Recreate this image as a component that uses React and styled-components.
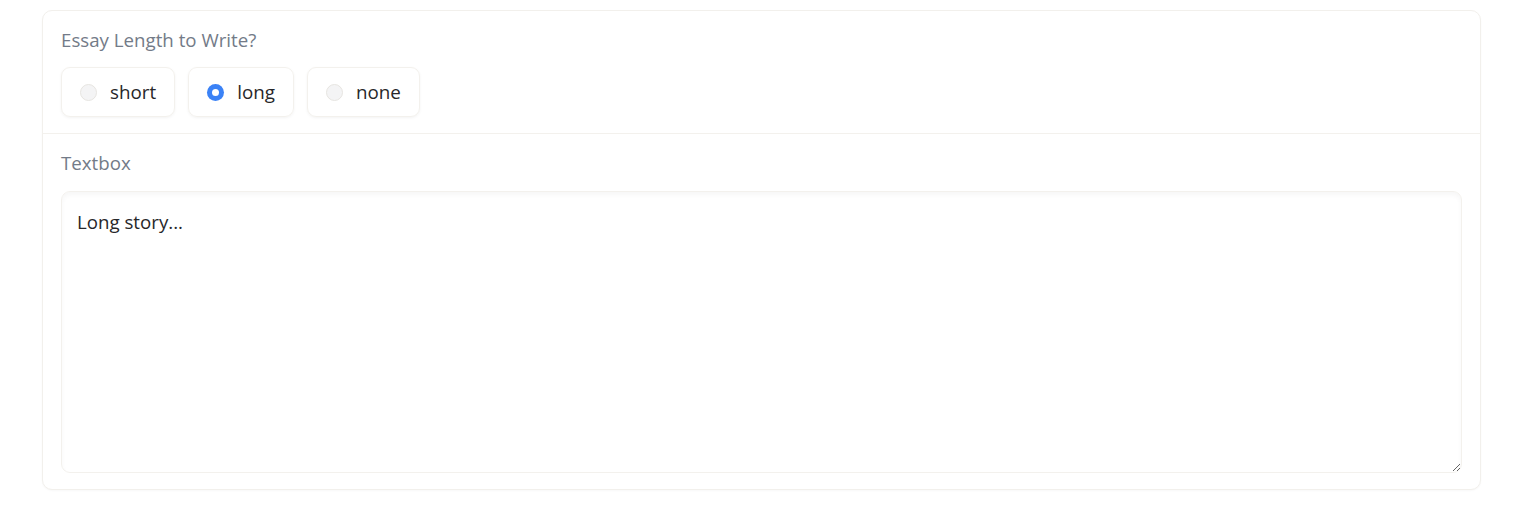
import React from "react";
import styled, { createGlobalStyle } from "styled-components";

const Global = createGlobalStyle`
  html, body { margin: 0; padding: 0; background: #ffffff; }
  body { font-family: "Open Sans", "Noto Sans", sans-serif; }
  * { box-sizing: border-box; }
`;

const Page = styled.div`
  padding: 10px 46px 22px 42px;
`;

const Card = styled.div`
  border: 1px solid #f2f0ec;
  border-radius: 10px;
  background: #fff;
  box-shadow: 0 1px 2px rgba(0, 0, 0, 0.03);
  overflow: hidden;
`;

const Section = styled.div`
  display: flex;
  flex-direction: column;
  gap: ${(p) => p.$gap}px;
  padding: ${(p) => p.$pad};
  border-top: ${(p) => (p.$divider ? "1px solid #f3f1ed" : "none")};
`;

const Label = styled.div`
  font-size: 18.7px;
  line-height: 24px;
  color: #737b88;
`;

const Options = styled.div`
  display: flex;
  gap: 13px;
`;

const Pill = styled.label`
  display: flex;
  align-items: center;
  gap: 13px;
  height: 50px;
  padding: 0 18px 1px 18px;
  border: 1px solid #f3f1ed;
  border-radius: 9px;
  box-shadow: 0 1px 3px rgba(0, 0, 0, 0.05);
  font-size: 18.8px;
  color: #27272a;
  cursor: pointer;
`;

const Dot = styled.span`
  width: 17px;
  height: 17px;
  border-radius: 50%;
  flex: none;
  margin-top: 1px;
  background: ${(p) => (p.$checked ? "#3b82f6" : "#f4f4f5")};
  border: ${(p) => (p.$checked ? "none" : "1px solid #e7e5e1")};
  display: flex;
  align-items: center;
  justify-content: center;
  &::after {
    content: "";
    display: ${(p) => (p.$checked ? "block" : "none")};
    width: 7px;
    height: 7px;
    border-radius: 50%;
    background: #fff;
  }
`;

const Area = styled.textarea`
  display: block;
  width: 100%;
  height: 282px;
  resize: vertical;
  border: 1px solid #f3f1ed;
  border-radius: 9px;
  padding: 17px 15px;
  font-family: "Open Sans", "Noto Sans", sans-serif;
  font-size: 18.7px;
  line-height: 26px;
  color: #27272a;
  background: #fff;
  box-shadow: inset 0 3px 5px rgba(0, 0, 0, 0.035);
  outline: none;
`;

const options = ["short", "long", "none"];

export default function App() {
  return (
    <>
      <Global />
      <Page>
        <Card>
          <Section $gap={15} $pad="17px 18px 16px 18px">
            <Label>Essay Length to Write?</Label>
            <Options>
              {options.map((o) => (
                <Pill key={o}>
                  <Dot $checked={o === "long"} />
                  {o}
                </Pill>
              ))}
            </Options>
          </Section>
          <Section $divider $gap={16} $pad="17px 18px 16px 18px">
            <Label>Textbox</Label>
            <Area defaultValue="Long story..." spellCheck={false} />
          </Section>
        </Card>
      </Page>
    </>
  );
}
